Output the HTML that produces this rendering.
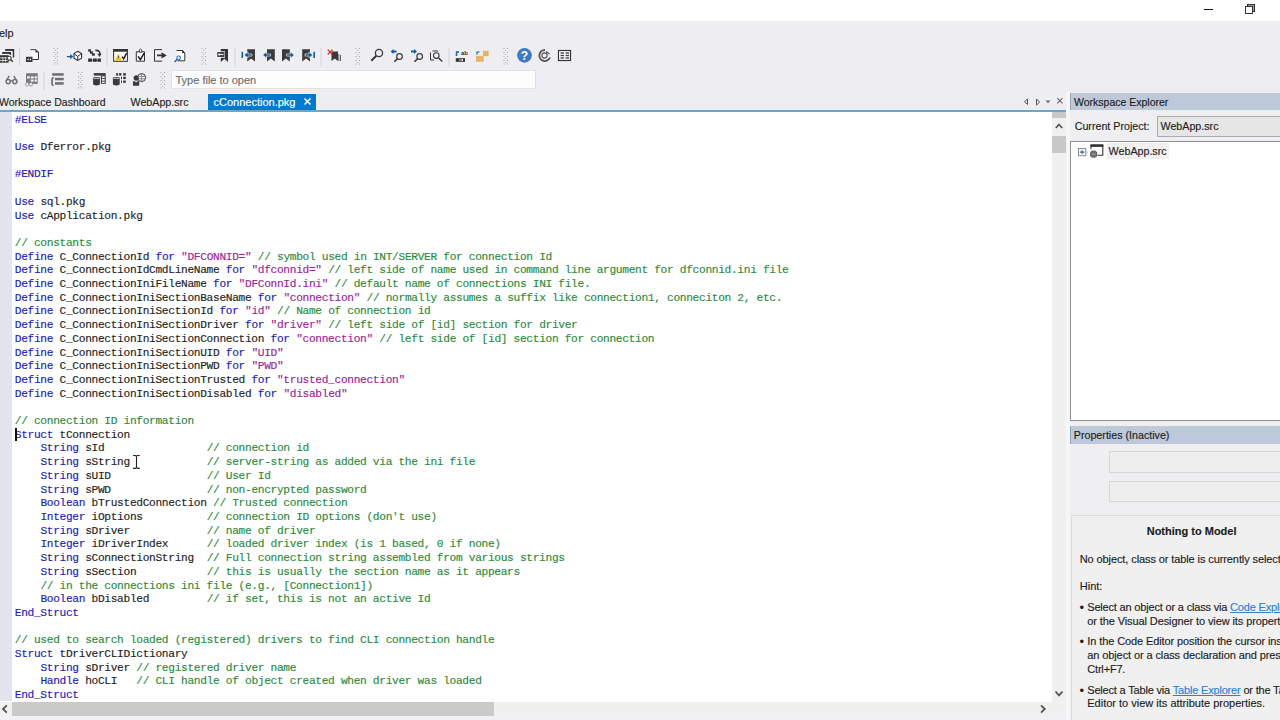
<!DOCTYPE html>
<html><head><meta charset="utf-8">
<style>
*{margin:0;padding:0;box-sizing:border-box}
html,body{width:1280px;height:720px;overflow:hidden;background:#EEEEF2;font-family:"Liberation Sans",sans-serif;position:relative}
.abs{position:absolute}
.ui{-webkit-text-stroke:0.15px currentColor;position:absolute;font-family:"Liberation Sans",sans-serif;font-size:10.7px;line-height:13px;color:#1E1E1E;white-space:nowrap}
#title{left:0;top:0;width:1280px;height:21px;background:#FFFFFF}
#tabline{left:0;top:110px;width:1066px;height:2px;background:#6AA8CA}
#acttab{left:208px;top:94px;width:108px;height:17px;background:#007ACC}
#editor{left:0;top:112px;width:1052px;height:590px;background:#FFFFFF;overflow:hidden}
#gutter{left:0;top:0;width:12px;height:589px;background:#E2E4F0}
#code{-webkit-text-stroke:0.15px currentColor;left:14.8px;top:1.6px;font-family:"Liberation Mono",monospace;font-size:11.2px;letter-spacing:-0.32px;line-height:13.714px;color:#1E1E1E}
.ln{white-space:pre;height:13.714px}
.k{color:#1C1CB4}
.s{color:#9A2495}
.c{color:#2B8A3B}
#vscroll{left:1052px;top:112px;width:14px;height:604px;background:#F0F0F0}
#hscroll{left:0;top:702px;width:1052px;height:14px;background:#F0F0F0}
#bottom{left:0;top:716px;width:1070px;height:4px;background:#F0F0F5}
#strip{left:1066px;top:92px;width:4px;height:628px;background:#F6F6F8}
#rpanel{left:1070px;top:92px;width:210px;height:628px;background:#EFEFF2;overflow:hidden}
.hdr{position:absolute;left:0;width:210px;height:17.5px;background:#BDC8D9;border-left:1px solid #97A6BE}
#tree{left:0;top:49px;width:210px;height:280px;background:#fff;border:1px solid #8E8E93;border-right:none}
.tb{position:absolute;background:#EEEEEE;border:1px solid #D6D6D6;border-right:none}
#lower{left:1px;top:423px;width:209px;height:205px;background:#F0F0F0;border-left:1px solid #DCDCDC;border-top:1px solid #DCDCDC}
.hint{-webkit-text-stroke:0.15px currentColor;position:absolute;left:9.75px;font-family:"Liberation Sans",sans-serif;font-size:11px;line-height:13px;color:#1E1E1E;white-space:nowrap}
.hint.i{left:17.25px}
.bul{position:absolute;left:9.5px;font-size:13px;line-height:13px;color:#222}
.lnk{color:#2F7FD0;text-decoration:underline}
</style></head><body>
<div id="title" class="abs"></div>
<div class="ui" style="left:-1px;top:27px;font-size:11px">elp</div>
<div class="abs" style="left:170.8px;top:69.8px;width:365.7px;height:19.7px;background:#FDFDFD;border:1px solid #E3E3E6"></div>
<div class="ui" style="left:175.5px;top:73.5px;color:#6D6D6D;font-size:11px">Type file to open</div>
<div id="acttab" class="abs"></div>
<div class="ui" style="left:-1px;top:96px;font-size:10.5px">Workspace Dashboard</div>
<div class="ui" style="left:130.5px;top:96px">WebApp.src</div>
<div class="ui" style="left:213.5px;top:96px;color:#fff;font-size:11px">cConnection.pkg</div>
<svg class="abs" style="left:302px;top:97px" width="12" height="10"><path d="M2.5 1.5 L8.5 7.5 M8.5 1.5 L2.5 7.5" stroke="#fff" stroke-width="1.6"/></svg>
<svg class="abs" style="left:1020px;top:94px" width="46" height="16">
<path d="M7.5 5 L4.5 7.7 L7.5 10.5 Z" fill="none" stroke="#555" stroke-width="1"/>
<path d="M16.5 5 L19.5 8 L16.5 11.2 Z" fill="none" stroke="#555" stroke-width="1"/>
<path d="M25.5 6.5 H30.5 L28 9.2 Z" fill="#666"/>
<path d="M37.3 4.2 L42.5 9.4 M42.5 4.2 L37.3 9.4" stroke="#666" stroke-width="1.1"/>
</svg>
<div id="tabline" class="abs"></div>
<div id="editor" class="abs">
<div id="gutter" class="abs"></div>
<div id="code" class="abs">
<div class="ln"><span class="k">#ELSE</span></div>
<div class="ln">&nbsp;</div>
<div class="ln"><span class="k">Use</span> Dferror.pkg</div>
<div class="ln">&nbsp;</div>
<div class="ln"><span class="k">#ENDIF</span></div>
<div class="ln">&nbsp;</div>
<div class="ln"><span class="k">Use</span> sql.pkg</div>
<div class="ln"><span class="k">Use</span> cApplication.pkg</div>
<div class="ln">&nbsp;</div>
<div class="ln"><span class="c">// constants</span></div>
<div class="ln"><span class="k">Define</span> C_ConnectionId <span class="k">for</span> <span class="s">&quot;DFCONNID=&quot;</span> <span class="c">// symbol used in INT/SERVER for connection Id</span></div>
<div class="ln"><span class="k">Define</span> C_ConnectionIdCmdLineName <span class="k">for</span> <span class="s">&quot;dfconnid=&quot;</span> <span class="c">// left side of name used in command line argument for dfconnid.ini file</span></div>
<div class="ln"><span class="k">Define</span> C_ConnectionIniFileName <span class="k">for</span> <span class="s">&quot;DFConnId.ini&quot;</span> <span class="c">// default name of connections INI file.</span></div>
<div class="ln"><span class="k">Define</span> C_ConnectionIniSectionBaseName <span class="k">for</span> <span class="s">&quot;connection&quot;</span> <span class="c">// normally assumes a suffix like connection1, conneciton 2, etc.</span></div>
<div class="ln"><span class="k">Define</span> C_ConnectionIniSectionId <span class="k">for</span> <span class="s">&quot;id&quot;</span> <span class="c">// Name of connection id</span></div>
<div class="ln"><span class="k">Define</span> C_ConnectionIniSectionDriver <span class="k">for</span> <span class="s">&quot;driver&quot;</span> <span class="c">// left side of [id] section for driver</span></div>
<div class="ln"><span class="k">Define</span> C_ConnectionIniSectionConnection <span class="k">for</span> <span class="s">&quot;connection&quot;</span> <span class="c">// left side of [id] section for connection</span></div>
<div class="ln"><span class="k">Define</span> C_ConnectionIniSectionUID <span class="k">for</span> <span class="s">&quot;UID&quot;</span></div>
<div class="ln"><span class="k">Define</span> C_ConnectionIniSectionPWD <span class="k">for</span> <span class="s">&quot;PWD&quot;</span></div>
<div class="ln"><span class="k">Define</span> C_ConnectionIniSectionTrusted <span class="k">for</span> <span class="s">&quot;trusted_connection&quot;</span></div>
<div class="ln"><span class="k">Define</span> C_ConnectionIniSectionDisabled <span class="k">for</span> <span class="s">&quot;disabled&quot;</span></div>
<div class="ln">&nbsp;</div>
<div class="ln"><span class="c">// connection ID information</span></div>
<div class="ln"><span class="k">Struct</span> tConnection</div>
<div class="ln">    <span class="k">String</span> sId                <span class="c">// connection id</span></div>
<div class="ln">    <span class="k">String</span> sString            <span class="c">// server-string as added via the ini file</span></div>
<div class="ln">    <span class="k">String</span> sUID               <span class="c">// User Id</span></div>
<div class="ln">    <span class="k">String</span> sPWD               <span class="c">// non-encrypted password</span></div>
<div class="ln">    <span class="k">Boolean</span> bTrustedConnection <span class="c">// Trusted connection</span></div>
<div class="ln">    <span class="k">Integer</span> iOptions          <span class="c">// connection ID options (don&#x27;t use)</span></div>
<div class="ln">    <span class="k">String</span> sDriver            <span class="c">// name of driver</span></div>
<div class="ln">    <span class="k">Integer</span> iDriverIndex      <span class="c">// loaded driver index (is 1 based, 0 if none)</span></div>
<div class="ln">    <span class="k">String</span> sConnectionString  <span class="c">// Full connection string assembled from various strings</span></div>
<div class="ln">    <span class="k">String</span> sSection           <span class="c">// this is usually the section name as it appears</span></div>
<div class="ln">    <span class="c">// in the connections ini file (e.g., [Connection1])</span></div>
<div class="ln">    <span class="k">Boolean</span> bDisabled         <span class="c">// if set, this is not an active Id</span></div>
<div class="ln"><span class="k">End_Struct</span></div>
<div class="ln">&nbsp;</div>
<div class="ln"><span class="c">// used to search loaded (registered) drivers to find CLI connection handle</span></div>
<div class="ln"><span class="k">Struct</span> tDriverCLIDictionary</div>
<div class="ln">    <span class="k">String</span> sDriver <span class="c">// registered driver name</span></div>
<div class="ln">    <span class="k">Handle</span> hoCLI   <span class="c">// CLI handle of object created when driver was loaded</span></div>
<div class="ln"><span class="k">End_Struct</span></div></div>
<div class="abs" style="left:15px;top:315.5px;width:2px;height:13.2px;background:#111"></div>
<svg class="abs" style="left:132px;top:341.5px" width="10" height="17"><path d="M1.1 1.5 H3.4 L4.5 2.3 L5.6 1.5 H7.8 M4.5 2.3 V13.6 M1.1 14.4 H3.4 L4.5 13.6 L5.6 14.4 H7.8" stroke="#222" stroke-width="1.1" fill="none"/></svg>
</div>
<div id="vscroll" class="abs"></div>
<div class="abs" style="left:1052px;top:112px;width:13.5px;height:5.5px;background:#C8C8C8"></div>
<div class="abs" style="left:1052px;top:136px;width:13.5px;height:16.5px;background:#C8C8C8"></div>
<svg class="abs" style="left:1052px;top:118px" width="14" height="14"><path d="M3.8 10 L7 6.5 L10.2 10" fill="none" stroke="#555" stroke-width="1.7"/></svg>
<svg class="abs" style="left:1052px;top:686px" width="14" height="14"><path d="M3.5 5.5 L7 9.3 L10.5 5.5" fill="none" stroke="#555" stroke-width="1.8"/></svg>
<div id="hscroll" class="abs"></div>
<div class="abs" style="left:12.2px;top:702px;width:482px;height:13.5px;background:#CACACA"></div>
<svg class="abs" style="left:0;top:702px" width="12" height="14"><path d="M6.8 3.3 L3 7 L6.8 10.7" fill="none" stroke="#555" stroke-width="1.8"/></svg>
<svg class="abs" style="left:1036px;top:702px" width="14" height="14"><path d="M5 3.3 L8.8 7 L5 10.7" fill="none" stroke="#555" stroke-width="1.8"/></svg>
<div id="bottom" class="abs"></div>
<div id="strip" class="abs"></div>
<div id="rpanel" class="abs">
  <div class="hdr" style="top:0.7px"></div>
  <div class="ui" style="left:4px;top:3.8px;font-size:10.5px">Workspace Explorer</div>
  <div class="ui" style="left:4.7px;top:27.5px">Current Project:</div>
  <div class="abs" style="left:87px;top:23.6px;width:123px;height:21px;background:#E6E6E6;border:1px solid #ACACAC;border-right:none"></div>
  <div class="ui" style="left:90.5px;top:27.5px">WebApp.src</div>
  <div id="tree" class="abs"></div>
  <svg class="abs" style="left:7px;top:52px" width="36" height="18">
    <rect x="1.5" y="4.5" width="7.2" height="7.2" fill="#fff" stroke="#8C8C8C" stroke-width="1"/>
    <path d="M2.9 8.1 H7.3 M5.1 5.9 V10.3" stroke="#3A63B0" stroke-width="1.1"/>
    <rect x="9.8" y="7.6" width="1" height="1" fill="#999"/>
    <path d="M14 5 V1 H25.8 V11.2 H20.5" fill="none" stroke="#333" stroke-width="1.1"/>
    <rect x="13.5" y="0.5" width="12.8" height="2.4" fill="#333"/>
    <circle cx="16.6" cy="10.2" r="3.6" fill="#444"/>
    <path d="M13.2 10.2 H20 M16.6 6.8 V13.6 M15 7.2 V13.2 M18.2 7.2 V13.2" stroke="#bbb" stroke-width="0.6"/>
  </svg>
  <div class="abs" style="left:36.5px;top:51.2px;width:62px;height:16px;background:#F0F0F0"></div>
  <div class="ui" style="left:38.6px;top:52.5px">WebApp.src</div>
  <div class="hdr" style="top:334.3px"></div>
  <div class="ui" style="left:3.8px;top:337px">Properties (Inactive)</div>
  <div class="tb" style="left:39.4px;top:358.6px;width:171px;height:22px"></div>
  <div class="tb" style="left:39.4px;top:388.6px;width:171px;height:21px"></div>
  <div id="lower" class="abs"></div>
  <div class="ui" style="left:76.7px;top:432.5px;font-weight:bold;font-size:11px">Nothing to Model</div>
  <div class="hint" style="top:460.7px;letter-spacing:-0.1px">No object, class or table is currently selected.</div>
  <div class="hint" style="top:487.7px">Hint:</div>
  <div class="bul" style="top:508.7px">&#8226;</div>
  <div class="hint i" style="top:508.7px;letter-spacing:-0.18px">Select an object or a class via <span class="lnk">Code Explorer</span></div>
  <div class="hint i" style="top:522.7px;letter-spacing:-0.1px">or the Visual Designer to view its properties.</div>
  <div class="bul" style="top:543.2px">&#8226;</div>
  <div class="hint i" style="top:543.2px;letter-spacing:-0.1px">In the Code Editor position the cursor inside</div>
  <div class="hint i" style="top:556.9px;letter-spacing:-0.1px">an object or a class declaration and press</div>
  <div class="hint i" style="top:570.7px;letter-spacing:-0.18px">Ctrl+F7.</div>
  <div class="bul" style="top:591.9px">&#8226;</div>
  <div class="hint i" style="top:591.9px;letter-spacing:-0.18px">Select a Table via <span class="lnk">Table Explorer</span> or the Table</div>
  <div class="hint i" style="top:605.2px">Editor to view its attribute properties.</div>
</div>
<svg class="abs" style="left:0;top:0" width="1280" height="120" viewBox="0 0 1280 120">
<!-- title bar buttons -->
<rect x="1204" y="9" width="9" height="1" fill="#111"/>
<rect x="1247.5" y="4.5" width="7" height="7" fill="#999" stroke="#333" stroke-width="1"/>
<rect x="1245.5" y="6.5" width="7" height="7" fill="#fff" stroke="#333" stroke-width="1"/>
<!-- separators -->
<g fill="#D4D4D8">
<rect x="19" y="47.5" width="1" height="18"/>
<rect x="106.5" y="47.5" width="1" height="18"/>
<rect x="234.5" y="47.5" width="1" height="18"/>
<rect x="320.5" y="47.5" width="1" height="18"/>
<rect x="448.5" y="47.5" width="1" height="18"/>
<rect x="43.5" y="71.5" width="1" height="19"/>
</g>
<!-- grips -->
<g fill="#A0A0A8">
<g id="grip1">
<rect x="53.5" y="48" width="1" height="1"/><rect x="57" y="48" width="1" height="1"/>
<rect x="55.3" y="50" width="1" height="1"/>
<rect x="53.5" y="52" width="1" height="1"/><rect x="57" y="52" width="1" height="1"/>
<rect x="55.3" y="54" width="1" height="1"/>
<rect x="53.5" y="56" width="1" height="1"/><rect x="57" y="56" width="1" height="1"/>
<rect x="55.3" y="58" width="1" height="1"/>
<rect x="53.5" y="60" width="1" height="1"/><rect x="57" y="60" width="1" height="1"/>
<rect x="55.3" y="62" width="1" height="1"/>
<rect x="53.5" y="63.5" width="1" height="1"/><rect x="57" y="63.5" width="1" height="1"/>
</g>
<use href="#grip1" x="148"/>
<use href="#grip1" x="302"/>
<use href="#grip1" x="450"/>
<use href="#grip1" x="24.5" y="24"/>
<use href="#grip1" x="107" y="24"/>
</g>
<!-- icon1: table search -->
<g fill="#333">
<rect x="5.2" y="49" width="8.9" height="1.9"/><rect x="12.8" y="49" width="1.4" height="8.5"/>
<rect x="2.2" y="52" width="8.8" height="1.9"/><rect x="9.7" y="52" width="1.4" height="3"/>
<rect x="0" y="55.2" width="8.6" height="7.5"/>
</g>
<g fill="#EEE"><rect x="0" y="57.5" width="8" height="0.8"/><rect x="0" y="60" width="8" height="0.8"/><rect x="2.5" y="57" width="0.8" height="5"/><rect x="5.3" y="57" width="0.8" height="5"/></g>
<circle cx="9.2" cy="58.2" r="2" fill="#EEE" stroke="#444" stroke-width="1.1"/>
<line x1="10.6" y1="59.6" x2="12.8" y2="61.8" stroke="#444" stroke-width="1.4"/>
<!-- icon2: doc with code -->
<path d="M30.5 49.7 H36 L38.5 52.2 V59.5 H32.5" fill="#fff" stroke="#333" stroke-width="1"/>
<path d="M35.5 49.5 V52.5 H38.7 Z" fill="#333"/>
<rect x="26" y="56.8" width="6.5" height="5.2" fill="#333"/>
<path d="M28.6 58 L27.1 59.4 L28.6 60.8 Z M29.9 58 L31.4 59.4 L29.9 60.8 Z" fill="#eee"/>
<!-- icon3: arrow cube -->
<path d="M66.9 55.9 H70.2 V54 L73.3 56.6 L70.2 59.2 V57.3 H66.9 Z" fill="#0E5CA8"/>
<path d="M77.7 51.3 L81.6 53.6 V58.1 L77.7 60.4 L74 58.1 V53.6 Z" fill="#F8F8F8" stroke="#333" stroke-width="1.1"/>
<path d="M74 53.6 L77.7 56.4 L81.6 53.6 M77.7 56.4 V60.4" fill="none" stroke="#333" stroke-width="1"/>
<!-- icon4: boxes -->
<g fill="#333">
<rect x="88.2" y="49.3" width="2.8" height="2.4"/><rect x="90" y="51.3" width="2.9" height="2.4"/><rect x="91.9" y="53.3" width="2.9" height="2.4"/>
<rect x="88.1" y="58.5" width="3.8" height="3.3"/><rect x="93" y="58.5" width="3.8" height="3.3"/><rect x="97.6" y="58.5" width="3.3" height="3.3"/><rect x="91" y="59.8" width="7" height="0.8"/>
</g>
<path d="M95.3 50.4 Q100.6 50 99.8 54.8" fill="none" stroke="#333" stroke-width="1.6"/>
<path d="M97.4 53.8 L99.6 57 L101.6 53.8 Z" fill="#333"/>
<!-- icon5: warning window -->
<rect x="113.6" y="49.5" width="13.8" height="11.8" fill="#F8F8F8" stroke="#333" stroke-width="1"/>
<rect x="113.1" y="49" width="14.8" height="2.7" fill="#333"/>
<path d="M118.3 53.4 L122 60.8 H114.6 Z" fill="#F2C12E"/>
<rect x="117.9" y="56" width="0.9" height="2.2" fill="#6b5300"/>
<path d="M122 56.6 L123.7 58.8 L126.6 53.2" fill="none" stroke="#222" stroke-width="1.5"/>
<!-- icon6: clipboard -->
<path d="M136.3 51.8 H144.5 V61.2 H136.3 Z" fill="#F8F8F8" stroke="#333" stroke-width="1"/>
<path d="M139 52 Q139 49 140.5 49 Q142 49 142 52 Z" fill="#F8F8F8" stroke="#333" stroke-width="0.9"/>
<path d="M138.2 56.4 L140.4 59.6 L144.2 53.2" fill="none" stroke="#222" stroke-width="1.6"/>
<!-- icon7: arrow doc -->
<path d="M162 49.6 H154.5 V61.2 H162" fill="none" stroke="#333" stroke-width="1"/>
<path d="M157 54.6 H161.5 V52.3 L166.8 55.4 L161.5 58.5 V56.2 H157 Z" fill="#333"/>
<!-- icon8: doc magnifier -->
<path d="M176.5 50.5 H182.5 L184.8 52.8 V60.8 H177.5" fill="#fff" stroke="#333" stroke-width="1"/>
<path d="M182 50.2 V53 H185 Z" fill="#333"/>
<circle cx="178.7" cy="57.8" r="1.9" fill="#DDEEFA" stroke="#1A5FA8" stroke-width="1"/>
<line x1="177.3" y1="59.3" x2="174.5" y2="62" stroke="#1A5FA8" stroke-width="1.4"/>
<!-- icon9: bookmark doc -->
<path d="M220.8 49 H228 V62 L224.4 58.8 L220.8 62 Z" fill="#333"/>
<rect x="216.5" y="51.3" width="8.5" height="6.5" fill="#F4F4F4"/>
<rect x="217.2" y="52" width="7.3" height="5" fill="#444"/>
<path d="M218.2 54.5 H223.5 M219.2 53.2 V55.8" stroke="#eee" stroke-width="1"/>
<!-- bookmarks -->
<g fill="#3A3A3A">
<path d="M247.2 49.2 H255 V61.6 L251.1 58.5 L247.2 61.6 Z"/>
<path d="M267 49.2 H274.8 V61.6 L270.9 58.5 L267 61.6 Z"/>
<path d="M282 49.2 H289.8 V61.6 L285.9 58.5 L282 61.6 Z"/>
<path d="M302.2 49.2 H310 V61.6 L306.1 58.5 L302.2 61.6 Z"/>
<path d="M331.5 51.5 H338 V61 L334.8 58.5 L331.5 61 Z"/>
</g>
<g fill="#0E5CA8" stroke="#F2F2F2" stroke-width="0.6">
<rect x="241.5" y="51.8" width="1.6" height="6.2" stroke="none"/>
<path d="M244.2 55 L248 51.8 V53.9 H252 V56.1 H248 V58.2 Z"/>
<path d="M262.8 55 L266.6 51.8 V53.9 H270.6 V56.1 H266.6 V58.2 Z"/>
<path d="M294.2 55 L290.4 51.8 V53.9 H286.4 V56.1 H290.4 V58.2 Z"/>
<path d="M312.8 55 L309 51.8 V53.9 H305 V56.1 H309 V58.2 Z"/>
<rect x="313.4" y="51.8" width="1.6" height="6.2" stroke="none"/>
</g>
<path d="M327.7 49.8 L332.5 54.5 M332.5 49.8 L327.7 54.5" stroke="#D0352B" stroke-width="1.2"/>
<g stroke="#555" stroke-width="0.9"><line x1="338.8" y1="54" x2="338.8" y2="61"/><line x1="340.5" y1="55" x2="340.5" y2="61"/></g>
<!-- magnifiers -->
<circle cx="379" cy="53" r="3.6" fill="none" stroke="#3A3A3A" stroke-width="1.3"/>
<line x1="376.3" y1="55.8" x2="371.3" y2="60.8" stroke="#3A3A3A" stroke-width="2"/>
<circle cx="399.5" cy="56.5" r="2.8" fill="none" stroke="#3A3A3A" stroke-width="1.2"/>
<line x1="397.5" y1="58.6" x2="394.3" y2="61.7" stroke="#3A3A3A" stroke-width="1.6"/>
<path d="M390.6 51.5 L393.5 49 V50.6 H396.5 V52.4 H393.5 V54 Z" fill="#0E5CA8"/>
<circle cx="419.7" cy="56.5" r="2.8" fill="none" stroke="#3A3A3A" stroke-width="1.2"/>
<line x1="417.7" y1="58.6" x2="414.5" y2="61.7" stroke="#3A3A3A" stroke-width="1.6"/>
<path d="M417 51.5 L414.1 49 V50.6 H411 V52.4 H414.1 V54 Z" fill="#0E5CA8"/>
<path d="M432.5 51 H438 M430.5 52.5 V60 H434" fill="none" stroke="#3A3A3A" stroke-width="1"/>
<circle cx="436.3" cy="55.6" r="2.8" fill="#F4F4F4" stroke="#3A3A3A" stroke-width="1.1"/>
<line x1="438.3" y1="57.8" x2="442.3" y2="61.5" stroke="#3A3A3A" stroke-width="1.5"/>
<!-- replace ab -->
<rect x="455.8" y="58.2" width="9.2" height="3.6" fill="#333"/>
<rect x="459.6" y="59" width="0.9" height="2" fill="#eee"/><rect x="461.5" y="59" width="1.5" height="2" fill="#eee"/>
<text x="461" y="55" font-family="Liberation Sans" font-size="6" font-weight="bold" fill="#333">ab</text>
<path d="M456.5 54.5 V52 H459" fill="none" stroke="#1A5FA8" stroke-width="1.3"/>
<circle cx="456.5" cy="55" r="1" fill="#1A5FA8"/>
<!-- folders -->
<rect x="476" y="55.8" width="7.7" height="6" fill="#E6B36A"/>
<rect x="483" y="50.8" width="5.6" height="5.3" fill="#E6B36A"/>
<path d="M477 54.5 V52 H479.5" fill="none" stroke="#1A5FA8" stroke-width="1.2"/>
<!-- help -->
<circle cx="524.5" cy="55.4" r="7.3" fill="#3C7AC4"/>
<text x="524.5" y="59.8" text-anchor="middle" font-family="Liberation Sans" font-size="12" font-weight="bold" fill="#fff">?</text>
<!-- pie -->
<path d="M550 57.5 A5.5 5.5 0 1 1 545 50" fill="none" stroke="#555" stroke-width="1.8"/>
<path d="M546 51.5 L549.5 54" fill="none" stroke="#555" stroke-width="1.2"/>
<circle cx="544.5" cy="55.5" r="2.6" fill="none" stroke="#555" stroke-width="1.1"/>
<!-- grid -->
<rect x="558.5" y="50.5" width="12" height="10" fill="#fff" stroke="#333" stroke-width="1.2"/>
<g fill="#444"><rect x="560.5" y="52.3" width="3.5" height="1.4"/><rect x="565.5" y="52.3" width="3.5" height="1.4"/><rect x="560.5" y="54.8" width="3.5" height="1.4"/><rect x="565.5" y="54.8" width="3.5" height="1.4"/><rect x="560.5" y="57.3" width="3.5" height="1.4"/><rect x="565.5" y="57.3" width="3.5" height="1.4"/></g>
<!-- row2: glasses -->
<g fill="none" stroke="#707070" stroke-width="1.4">
<circle cx="8.2" cy="81.6" r="2.1"/><circle cx="14.8" cy="81.6" r="2.1"/>
<path d="M10.3 81.2 Q11.5 80.4 12.7 81.2 M6.1 81 L9.2 75.8 M16.9 81 L13.8 75.8"/>
</g>
<!-- row2: grid w glasses -->
<rect x="26" y="73.2" width="11.7" height="10.7" fill="#7A7A7A"/>
<g fill="#F0F0F0"><rect x="27" y="76.3" width="2.8" height="2.2"/><rect x="30.8" y="76.3" width="2.8" height="2.2"/><rect x="34.6" y="76.3" width="2.3" height="2.2"/><rect x="30.8" y="79.5" width="2.8" height="2.2"/><rect x="34.6" y="79.5" width="2.3" height="2.2"/></g>
<g fill="#F0F0F0" stroke="#888" stroke-width="0.8"><circle cx="27.2" cy="84.3" r="1.7"/><circle cx="31" cy="84.3" r="1.7"/></g>
<!-- row2: list -->
<g fill="#6E6E6E">
<rect x="52.2" y="73.2" width="11.5" height="2.5"/>
<rect x="55" y="77.8" width="8.7" height="2.5"/>
<rect x="55" y="82.2" width="8.7" height="2.5"/>
</g>
<path d="M53.6 77.6 Q52 78 52 79.8 V83.6 Q52 85.3 53.6 85.5" fill="none" stroke="#666" stroke-width="1.6"/>
<!-- row2: db icons -->
<g fill="#3A3A3A">
<rect x="93.8" y="73.1" width="11.9" height="2.5"/>
<path d="M93.1 77.6 Q96.5 76.2 99.9 77.6 V84.6 Q96.5 86.3 93.1 84.6 Z"/>
<rect x="100.9" y="75.4" width="4.8" height="8.5"/>
<path d="M112.9 77.6 Q116.3 76.2 119.7 77.6 V84.6 Q116.3 86.3 112.9 84.6 Z"/>
<rect x="116.1" y="73.1" width="2" height="2.5"/><rect x="119.1" y="73.1" width="2.3" height="2.5"/><rect x="123.2" y="73.1" width="2.6" height="2.5"/>
<rect x="121" y="76.8" width="1" height="2.3"/><rect x="123.2" y="76.8" width="2.6" height="2.3"/>
<rect x="121" y="80.5" width="1" height="2.3"/><rect x="123.2" y="80.5" width="2.6" height="2.3"/>
<circle cx="136.2" cy="78.1" r="2.5"/>
<path d="M133 81.2 H135 L136.1 82.8 L137.2 81.2 H139.2 V85.7 H133 Z"/>
</g>
<g fill="#F2F2F2"><rect x="101.9" y="76.4" width="2.8" height="1.7"/><rect x="101.9" y="79" width="2.8" height="1.7"/><rect x="101.9" y="81.6" width="2.8" height="1.5"/>
<path d="M93.8 78.2 Q96.5 77.2 99.2 78.2 V79 Q96.5 78.2 93.8 79 Z"/><path d="M113.6 78.2 Q116.3 77.2 119 78.2 V79 Q116.3 78.2 113.6 79 Z"/></g>
<circle cx="141.6" cy="77.6" r="4" fill="#F2F2F2" stroke="#3A3A3A" stroke-width="1"/>
<path d="M138.2 76.5 H145 M138.2 78.8 H145 M141.6 73.6 V81.6" stroke="#777" stroke-width="0.8"/>
<circle cx="136.2" cy="78.1" r="2.5" fill="#3A3A3A"/>
</svg>
</body></html>
